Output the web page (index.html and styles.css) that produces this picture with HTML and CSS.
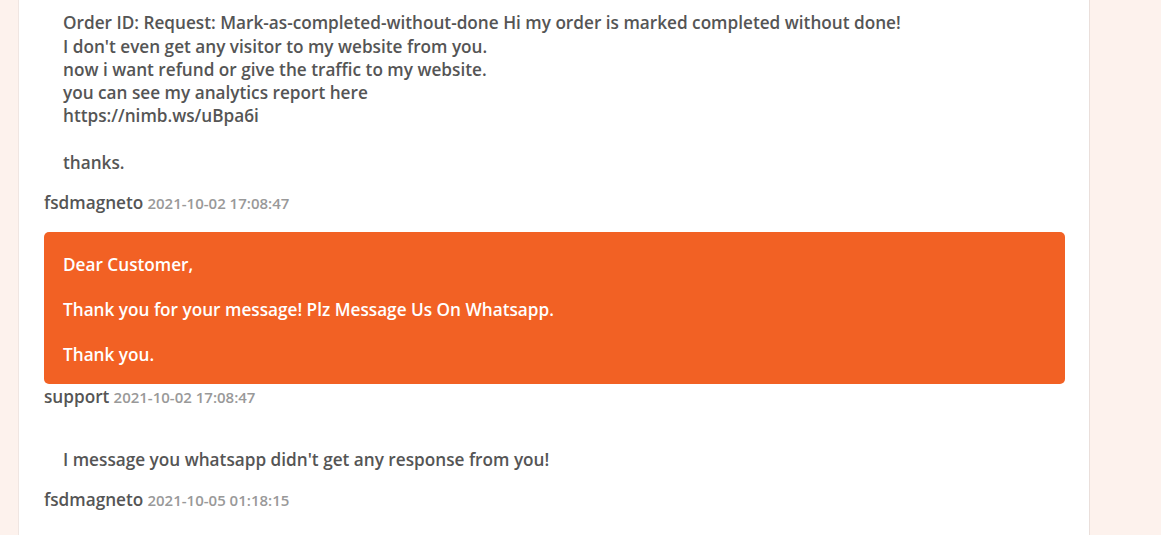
FILE: index.html
```html
<!DOCTYPE html>
<html>
<head>
<meta charset="utf-8">
<link rel="stylesheet" href="styles.css">
</head>
<body>
<div class="page">
  <div class="card">
    <div class="thread">
      <div class="msg">
        <div class="bubble">Order ID: Request: Mark-as-completed-without-done Hi my order is marked completed without done!<br>I don't even get any visitor to my website from you.<br>now i want refund or give the traffic to my website.<br>you can see my analytics report here<br>https://nimb.ws/uBpa6i<br><br>thanks.</div>
        <div class="meta"><span class="author">fsdmagneto</span> <span class="date">2021-10-02 17:08:47</span></div>
      </div>
      <div class="msg">
        <div class="bubble bubble-support">Dear Customer,<br><br>Thank you for your message! Plz Message Us On Whatsapp.<br><br>Thank you.</div>
        <div class="meta"><span class="author">support</span> <span class="date">2021-10-02 17:08:47</span></div>
      </div>
      <div class="msg">
        <div class="bubble">I message you whatsapp didn't get any response from you!</div>
        <div class="meta"><span class="author">fsdmagneto</span> <span class="date">2021-10-05 01:18:15</span></div>
      </div>
    </div>
  </div>
</div>
</body>
</html>
```
FILE: styles.css
```css
html, body {
  margin: 0;
  padding: 0;
  background: #fdf2ed;
  overflow: hidden;
}
body {
  font-family: "Open Sans", Lato, sans-serif;
  color: #555;
}
.page {
  display: flex;
  padding-left: 18px;
  height: 535px;
}
.card {
  width: 1072px;
  background: #fff;
  border-left: 1px solid #f0e6e2;
  border-right: 1px solid #eadfdb;
  box-sizing: border-box;
  padding: 0 24px 0 25px;
}
.thread {
  margin-top: -10px;
  display: flex;
  flex-direction: column;
  gap: 16px;
}
.bubble {
  font-size: 17.2px;
  font-weight: 600;
  line-height: 23.2px;
  padding: 21.4px 19px 16.5px 19px;
  border-radius: 5px;
}
.bubble-support {
  background: #f26124;
  color: #fff;
  line-height: 22.5px;
  padding-top: 21.75px;
  padding-bottom: 17.75px;
}
.meta {
  line-height: 26px;
}
.author {
  font-size: 17.2px;
  font-weight: 600;
  color: #555;
}
.date {
  font-size: 15px;
  font-weight: 600;
  color: #999;
}
```
